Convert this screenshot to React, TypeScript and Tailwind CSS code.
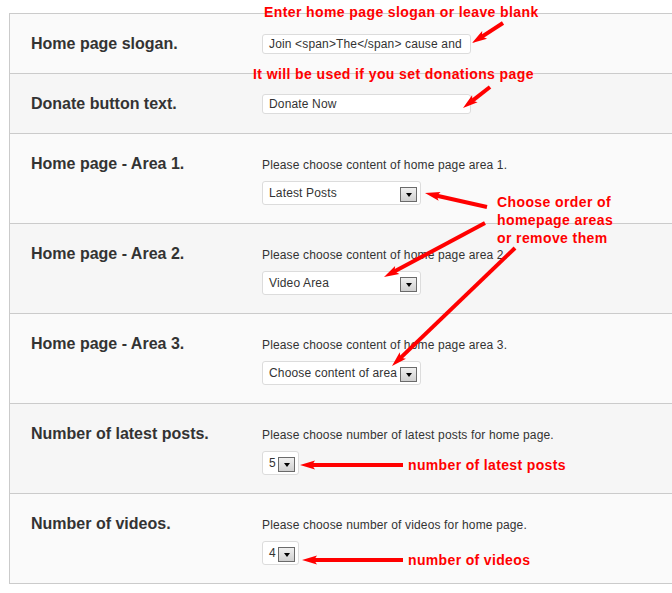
import React from "react";

type Row = {
  label: string;
  kind: "text" | "select" | "small";
  value: string;
  help?: string;
};

const rows: Row[] = [
  { label: "Home page slogan.", kind: "text", value: "Join <span>The</span> cause and" },
  { label: "Donate button text.", kind: "text", value: "Donate Now" },
  { label: "Home page - Area 1.", kind: "select", value: "Latest Posts", help: "Please choose content of home page area 1." },
  { label: "Home page - Area 2.", kind: "select", value: "Video Area", help: "Please choose content of home page area 2." },
  { label: "Home page - Area 3.", kind: "select", value: "Choose content of area", help: "Please choose content of home page area 3." },
  { label: "Number of latest posts.", kind: "small", value: "5", help: "Please choose number of latest posts for home page." },
  { label: "Number of videos.", kind: "small", value: "4", help: "Please choose number of videos for home page." },
];

// tail -> tip, drawn over the form like the red marker notes in the shot
const arrows: [number, number, number, number][] = [
  [503, 23, 472, 43],
  [490, 87, 463, 108],
  [487, 207, 425, 193],
  [485, 223, 384, 277],
  [515, 248, 392, 366],
  [403, 465, 300, 465],
  [403, 560, 302, 560],
];

function DropButton() {
  return (
    <span className="absolute right-[3px] top-[5px] flex h-[15px] w-[17px] items-center justify-center border border-[#6a6a6a] bg-gradient-to-b from-[#f0f0f0] to-[#cfcfcf]">
      <span className="h-0 w-0 border-l-[3.5px] border-r-[3.5px] border-t-[4px] border-l-transparent border-r-transparent border-t-black" />
    </span>
  );
}

function Arrow({ a }: { a: [number, number, number, number] }) {
  const [x1, y1, x2, y2] = a;
  const dx = x2 - x1;
  const dy = y2 - y1;
  const len = Math.hypot(dx, dy);
  const ux = dx / len;
  const uy = dy / len;
  const headLen = 15;
  const half = 4.5;
  const bx = x2 - ux * headLen;
  const by = y2 - uy * headLen;
  const px = -uy;
  const py = ux;
  const pts = [
    `${x2},${y2}`,
    `${bx + px * half},${by + py * half}`,
    `${x2 - ux * (headLen - 3)},${y2 - uy * (headLen - 3)}`,
    `${bx - px * half},${by - py * half}`,
  ].join(" ");
  return (
    <g>
      <line x1={x1} y1={y1} x2={x2 - ux * 10} y2={y2 - uy * 10} stroke="#ff0000" strokeWidth={4} />
      <polygon points={pts} fill="#ff0000" />
    </g>
  );
}

export default function App() {
  return (
    <div className="relative h-[593px] w-[672px] overflow-hidden bg-white font-['Liberation_Sans',Arial,sans-serif] text-[#333]">
      <div className="pt-[13px] pl-[9px]">
        <div className="border-l border-t border-[#cbcbcb]">
          {rows.map((r, i) => (
            <div
              key={r.label}
              className={`flex border-b border-[#cbcbcb] pl-[21px] ${i % 2 === 0 ? "bg-[#fafafa]" : "bg-[#f6f6f6]"} ${
                r.kind === "text" ? "h-[60px] items-center" : "h-[90px] items-start"
              }`}
            >
              <div className={`w-[231px] text-[16px] font-bold leading-[20px] text-[#333] ${r.kind === "text" ? "" : "pt-[20px]"}`}>
                {r.label}
              </div>
              {r.kind === "text" ? (
                <div className="h-[20px] w-[209px] overflow-hidden whitespace-nowrap rounded-[3px] border border-[#dcdcdc] bg-white pl-[6px] text-[12px] leading-[19px] tracking-[0.15px]">
                  {r.value}
                </div>
              ) : (
                <div className="flex flex-col pt-[23px]">
                  <p className="text-[12px] leading-[16px] tracking-[0.15px]">{r.help}</p>
                  <div
                    className={`relative mt-[8px] h-[24px] rounded-[3px] border border-[#dcdcdc] bg-white pl-[6px] text-[12px] leading-[22px] tracking-[0.15px] ${
                      r.kind === "select" ? "w-[159px]" : "w-[37px]"
                    }`}
                  >
                    {r.value}
                    <DropButton />
                  </div>
                </div>
              )}
            </div>
          ))}
        </div>
      </div>

      <svg className="absolute left-0 top-0" width={672} height={593}>
        {arrows.map((a, i) => (
          <Arrow key={i} a={a} />
        ))}
      </svg>

      <div className="absolute left-[264px] top-[4px] whitespace-nowrap text-[14px] font-bold leading-[16px] tracking-[0.4px] text-[#ff0000]">
        Enter home page slogan or leave blank
      </div>
      <div className="absolute left-[253px] top-[66px] whitespace-nowrap text-[14px] font-bold leading-[16px] tracking-[0.4px] text-[#ff0000]">
        It will be used if you set donations page
      </div>
      <div className="absolute left-[497px] top-[193px] whitespace-nowrap text-[14px] font-bold leading-[18px] tracking-[0.4px] text-[#ff0000]">
        Choose order of
        <br />
        homepage areas
        <br />
        or remove them
      </div>
      <div className="absolute left-[408px] top-[457px] whitespace-nowrap text-[14px] font-bold leading-[16px] tracking-[0.35px] text-[#ff0000]">
        number of latest posts
      </div>
      <div className="absolute left-[408px] top-[552px] whitespace-nowrap text-[14px] font-bold leading-[16px] tracking-[0.35px] text-[#ff0000]">
        number of videos
      </div>
    </div>
  );
}
